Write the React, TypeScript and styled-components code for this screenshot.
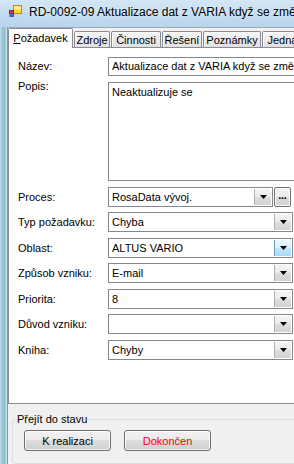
import React from 'react';
import styled, { createGlobalStyle, css } from 'styled-components';

const GlobalStyle = createGlobalStyle`
  html, body { margin: 0; padding: 0; overflow: hidden; background: #f0f0f0; }
  #root { width: 294px; height: 464px; overflow: hidden; }
  * { box-sizing: border-box; }
`;

const UI_FONT = `'Liberation Sans', Arial, sans-serif`;

const Window = styled.div`
  width: 294px;
  height: 464px;
  overflow: hidden;
  display: flex;
  flex-direction: column;
  font-family: ${UI_FONT};
  font-size: 11px;
  color: #000;
`;

const TitleBar = styled.div`
  flex: 0 0 27px;
  display: flex;
  align-items: center;
  gap: 7px;
  padding: 0 0 3px 8px;
  background: linear-gradient(180deg, #d4e7f6 0%, #c4dcf0 45%, #b9d4eb 100%);
  white-space: nowrap;
  overflow: hidden;
`;

const AppIcon = styled.svg`
  flex: 0 0 14px;
`;

const Title = styled.span`
  font-size: 12px;
  text-shadow: 0 0 5px rgba(255, 255, 255, 0.9);
`;

const Body = styled.div`
  flex: 1;
  display: flex;
  min-height: 0;
`;

const Frame = styled.div`
  flex: 0 0 8px;
  border-right: 1px solid #8c9aa4;
  background: linear-gradient(90deg, #c3dde9 0px, #9cc9d8 2px, #8cbfd0 5px, #d2e6ee 7px);
`;

const Client = styled.div`
  flex: 0 0 330px;
  display: flex;
  flex-direction: column;
  background: #f0f0f0;
  border-top: 1px solid #9aa8b2;
`;

const TabStrip = styled.div`
  flex: 0 0 19px;
  display: flex;
  align-items: flex-end;
`;

const Tab = styled.div<{ $active?: boolean; $w: number }>`
  width: ${(p) => p.$w}px;
  display: flex;
  align-items: center;
  justify-content: center;
  border: 1px solid #898c95;
  border-bottom: none;
  border-radius: 2px 2px 0 0;
  white-space: nowrap;
  overflow: hidden;
  ${(p) =>
    p.$active
      ? css`
          height: 20px;
          margin-bottom: -1px;
          padding-bottom: 1px;
          background: #fff;
          position: relative;
          z-index: 1;
        `
      : css`
          height: 16px;
          margin-left: 1px;
          background: linear-gradient(180deg, #f6f6f6 0%, #ebebeb 50%, #e0e0e0 100%);
          box-shadow: inset 1px 1px 0 #fcfcfc;
        `}
`;

const Mnemonic = styled.span`
  text-decoration: underline;
`;

const TabPage = styled.div`
  flex: 0 0 357px;
  background: #fff;
  border: 1px solid #898c95;
  padding: 9px 0 0 9px;
  display: flex;
  flex-direction: column;
`;

const Row = styled.div<{ $gap: number }>`
  display: flex;
  align-items: center;
  margin-bottom: ${(p) => p.$gap}px;
`;

const Label = styled.label<{ $top?: boolean }>`
  flex: 0 0 90px;
  white-space: nowrap;
  line-height: 13px;
  ${(p) =>
    p.$top &&
    css`
      align-self: flex-start;
      margin-top: -2px;
    `}
`;

const TextBox = styled.div`
  width: 230px;
  height: 19px;
  border: 1px solid #828790;
  background: #fff;
  padding: 0 3px;
  line-height: 17px;
  white-space: nowrap;
  overflow: hidden;
`;

const TextArea = styled.div`
  width: 230px;
  height: 99px;
  border: 1px solid #828790;
  background: #fff;
  padding: 3px 3px;
  line-height: 13px;
`;

const Combo = styled.div<{ $w: number }>`
  width: ${(p) => p.$w}px;
  height: 20px;
  display: flex;
  align-items: stretch;
  border: 1px solid #828790;
  background: #fff;
  padding: 1px;
`;

const ComboText = styled.span`
  flex: 1;
  padding-left: 2px;
  line-height: 16px;
  white-space: nowrap;
  overflow: hidden;
`;

const DropButton = styled.div<{ $hot?: boolean }>`
  flex: 0 0 17px;
  display: flex;
  align-items: center;
  justify-content: center;
  border-left: 1px solid ${(p) => (p.$hot ? '#6b9fc5' : '#b0b0b0')};
  background: ${(p) =>
    p.$hot
      ? 'linear-gradient(180deg, #ecf7fd 0%, #d9f0fc 50%, #bee6fd 51%, #a9dbf6 100%)'
      : 'linear-gradient(180deg, #f4f4f4 0%, #ebebeb 50%, #dddddd 51%, #d3d3d3 100%)'};
`;

const Arrow = styled.svg`
  display: block;
`;

const EllipsisButton = styled.div`
  flex: 0 0 17px;
  height: 20px;
  margin-left: 1px;
  border: 1px solid #707070;
  border-radius: 2px;
  background: linear-gradient(180deg, #f4f4f4 0%, #ebebeb 50%, #dddddd 51%, #d0d0d0 100%);
  box-shadow: inset 0 0 0 1px #fbfbfb;
  display: flex;
  align-items: center;
  justify-content: center;
  font-weight: bold;
  font-size: 11px;
  line-height: 11px;
  letter-spacing: -0.3px;
  padding-bottom: 3px;
`;

const Footer = styled.div`
  flex: 1;
  padding: 9px 0 0 4px;
`;

const GroupBox = styled.fieldset`
  width: 320px;
  margin: 0;
  padding: 0 0 12px;
  border: 1px solid #d5dfe5;
  border-radius: 3px;
  min-width: 0;
`;

const Legend = styled.legend`
  margin-left: 2px;
  padding: 0 2px;
  line-height: 13px;
  font-size: 11px;
`;

const ButtonRow = styled.div`
  display: flex;
  gap: 13px;
  padding: 4px 0 0 11px;
`;

const Button = styled.div<{ $danger?: boolean }>`
  width: 87px;
  height: 21px;
  border: 1px solid #707070;
  border-radius: 3px;
  background: linear-gradient(180deg, #f2f2f2 0%, #ebebeb 49%, #dddddd 50%, #cfcfcf 100%);
  box-shadow: inset 0 0 0 1px rgba(255, 255, 255, 0.75);
  display: flex;
  align-items: center;
  justify-content: center;
  color: ${(p) => (p.$danger ? '#ff0000' : '#000')};
`;

const DownArrow = () => (
  <Arrow width="7" height="4" viewBox="0 0 7 4">
    <path d="M0 0h7L3.5 4z" fill="#000" />
  </Arrow>
);

type ComboDef = { label: string; value: string; gap: number; hot?: boolean };

const combos: ComboDef[] = [
  { label: 'Typ požadavku:', value: 'Chyba', gap: 6 },
  { label: 'Oblast:', value: 'ALTUS VARIO', gap: 5, hot: true },
  { label: 'Způsob vzniku:', value: 'E-mail', gap: 6 },
  { label: 'Priorita:', value: '8', gap: 5 },
  { label: 'Důvod vzniku:', value: '', gap: 6 },
  { label: 'Kniha:', value: 'Chyby', gap: 0 },
];

const tabs = [
  { name: 'Zdroje', w: 36 },
  { name: 'Činnosti', w: 50 },
  { name: 'Řešení', w: 40 },
  { name: 'Poznámky', w: 58 },
  { name: 'Jednání', w: 50 },
];

export default function App() {
  return (
    <>
      <GlobalStyle />
      <Window>
        <TitleBar>
          <AppIcon width="14" height="14" viewBox="0 0 14 14">
            <rect x="5.5" y="0.5" width="8" height="8" fill="#ffd633" stroke="#c8862a" />
            <rect x="6.5" y="1.5" width="6" height="3" fill="#fff1a8" />
            <rect x="1.5" y="5.5" width="4" height="3" fill="#e23a2a" stroke="#a5201a" />
            <rect x="2" y="8.5" width="3.5" height="3" fill="#3d6fd6" stroke="#244a9c" strokeWidth="0.8" />
          </AppIcon>
          <Title>RD-0092-09 Aktualizace dat z VARIA když se změni údaje</Title>
        </TitleBar>
        <Body>
          <Frame />
          <Client>
            <TabStrip>
              <Tab $active $w={65}>
                <span>
                  <Mnemonic>P</Mnemonic>ožadavek
                </span>
              </Tab>
              {tabs.map((t) => (
                <Tab key={t.name} $w={t.w}>
                  {t.name}
                </Tab>
              ))}
            </TabStrip>
            <TabPage>
              <Row $gap={6}>
                <Label>Název:</Label>
                <TextBox>Aktualizace dat z VARIA když se změni údaje</TextBox>
              </Row>
              <Row $gap={6}>
                <Label $top>Popis:</Label>
                <TextArea>Neaktualizuje se</TextArea>
              </Row>
              <Row $gap={5}>
                <Label>Proces:</Label>
                <Combo $w={165}>
                  <ComboText>RosaData vývoj.</ComboText>
                  <DropButton>
                    <DownArrow />
                  </DropButton>
                </Combo>
                <EllipsisButton>...</EllipsisButton>
              </Row>
              {combos.map((c) => (
                <Row key={c.label} $gap={c.gap}>
                  <Label>{c.label}</Label>
                  <Combo $w={185}>
                    <ComboText>{c.value}</ComboText>
                    <DropButton $hot={c.hot}>
                      <DownArrow />
                    </DropButton>
                  </Combo>
                </Row>
              ))}
            </TabPage>
            <Footer>
              <GroupBox>
                <Legend>Přejít do stavu</Legend>
                <ButtonRow>
                  <Button>K realizaci</Button>
                  <Button $danger>Dokončen</Button>
                </ButtonRow>
              </GroupBox>
            </Footer>
          </Client>
        </Body>
      </Window>
    </>
  );
}
